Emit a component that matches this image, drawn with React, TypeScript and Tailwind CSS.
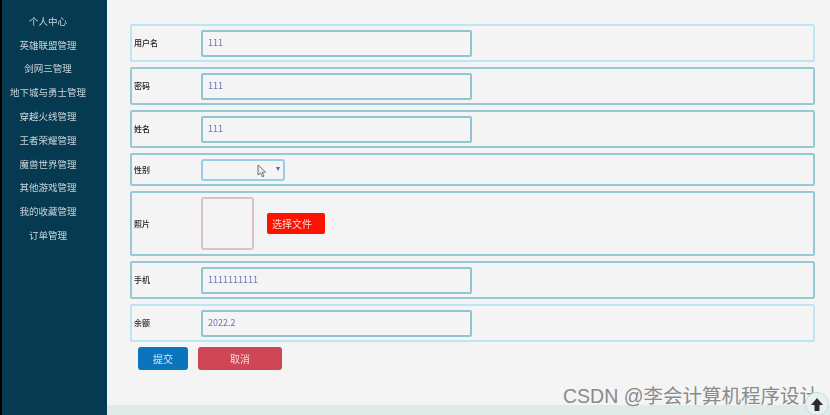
import React from 'react'

const menus = ['个人中心', '英雄联盟管理', '剑网三管理', '地下城与勇士管理', '穿越火线管理', '王者荣耀管理', '魔兽世界管理', '其他游戏管理', '我的收藏管理', '订单管理']

const font = { fontFamily: '"Noto Sans CJK SC", "Noto Sans", sans-serif' }
const markFont = { fontFamily: '"Liberation Sans", "Noto Sans CJK SC", sans-serif' }

function TextRow({ label, value, top }: { label: string; value: string; top?: boolean }) {
  return (
    <div className={`flex h-[38px] items-center rounded-[2px] border-2 pl-[2px] ${top ? 'border-[#bde6f3]' : 'border-[#96c8d6]'}`}>
      <span className="w-[67px] text-[8px] font-medium text-[#222]">{label}</span>
      <div className="flex h-[27px] w-[271px] items-center rounded-[2px] border-2 border-[#93c4d1] pl-[5px] text-[9px] text-[#6f74b5]">
        {value}
      </div>
    </div>
  )
}

export default function App() {
  return (
    <div className="relative h-[415px] w-[830px] overflow-hidden bg-[#f4f4f4]" style={font}>
      <div className="flex h-full w-full blur-[0.4px]">
        {/* Sidebar */}
        <div className="h-full w-[107px] shrink-0 border-l-2 border-black bg-[#063a50] pt-[9px]">
          {menus.map((m) => (
            <div key={m} className="flex h-[23.8px] items-center justify-center pr-[13px] text-[9.5px] text-[#c9d6db]">
              {m}
            </div>
          ))}
        </div>

        {/* Main */}
        <div className="flex h-full flex-1 flex-col">
          <div className="flex flex-1 flex-col pl-[23px] pr-[15px] pt-[24px]">
            <div className="flex flex-col gap-[5px]">
              <TextRow label="用户名" value="111" top />
              <TextRow label="密码" value="111" />
              <TextRow label="姓名" value="111" />
              <div className="flex h-[33px] items-center rounded-[2px] border-2 border-[#96c8d6] pl-[2px]">
                <span className="w-[67px] text-[8px] font-medium text-[#222]">性别</span>
                <div className="relative h-[22px] w-[84px] rounded-[3px] border-2 border-[#96cfe4]">
                  <svg className="absolute right-[3px] top-[6px]" width="4" height="4" viewBox="0 0 4 4">
                    <path d="M0 0 L4 0 L2 4 Z" fill="#5a5fc0" />
                  </svg>
                  <svg className="absolute left-[54px] top-[3px]" width="10" height="14" viewBox="0 0 10 14">
                    <path d="M1 1 L1 11 L3.5 9 L5.5 13 L7 12 L5.2 8.5 L8.5 8 Z" fill="#eef0f0" stroke="#6b7075" strokeWidth="1" />
                  </svg>
                </div>
              </div>
              <div className="flex h-[65px] items-center rounded-[2px] border-2 border-[#96c8d6] pl-[2px]">
                <span className="w-[67px] text-[8px] font-medium text-[#222]">照片</span>
                <div className="h-[53px] w-[53px] rounded-[3px] border-2 border-[#d6c3c5]" />
                <div className="ml-[13px] flex h-[21px] w-[58px] items-center rounded-[2px] bg-[#fb1200] pl-[5px] text-[10px] text-[#ffd8cc]">
                  选择文件
                </div>
              </div>
              <TextRow label="手机" value="1111111111" />
              <TextRow label="余额" value="2022.2" top />
            </div>
            <div className="mt-[5px] flex gap-[10px] pl-[8px]">
              <button className="flex h-[23px] w-[50px] items-center justify-center rounded-[3px] bg-[#0b74bd] text-[10px] text-[#d5e6f2]">
                提交
              </button>
              <button className="flex h-[23px] w-[84px] items-center justify-center rounded-[3px] bg-[#cf4655] text-[10px] text-[#f4d6da]">
                取消
              </button>
            </div>
          </div>
          <div className="h-[10px] bg-[#deebe6]" />
        </div>
      </div>

      {/* Watermark */}
      <div className="absolute left-[563px] top-[383px] whitespace-nowrap text-[19.5px] leading-[26px] text-[#8a8a8a]" style={markFont}>
        CSDN @李会计算机程序设计
      </div>
      {/* Back to top */}
      <div className="absolute left-[805px] top-[392px] flex h-[24px] w-[24px] items-center justify-center rounded-full border border-[#bcdcea] bg-[#e8f0f0]">
        <svg width="14" height="15" viewBox="0 0 14 15">
          <path d="M7 1 L13 8 L9.5 8 L9.5 14 L4.5 14 L4.5 8 L1 8 Z" fill="#2b2b2b" />
        </svg>
      </div>
    </div>
  )
}
